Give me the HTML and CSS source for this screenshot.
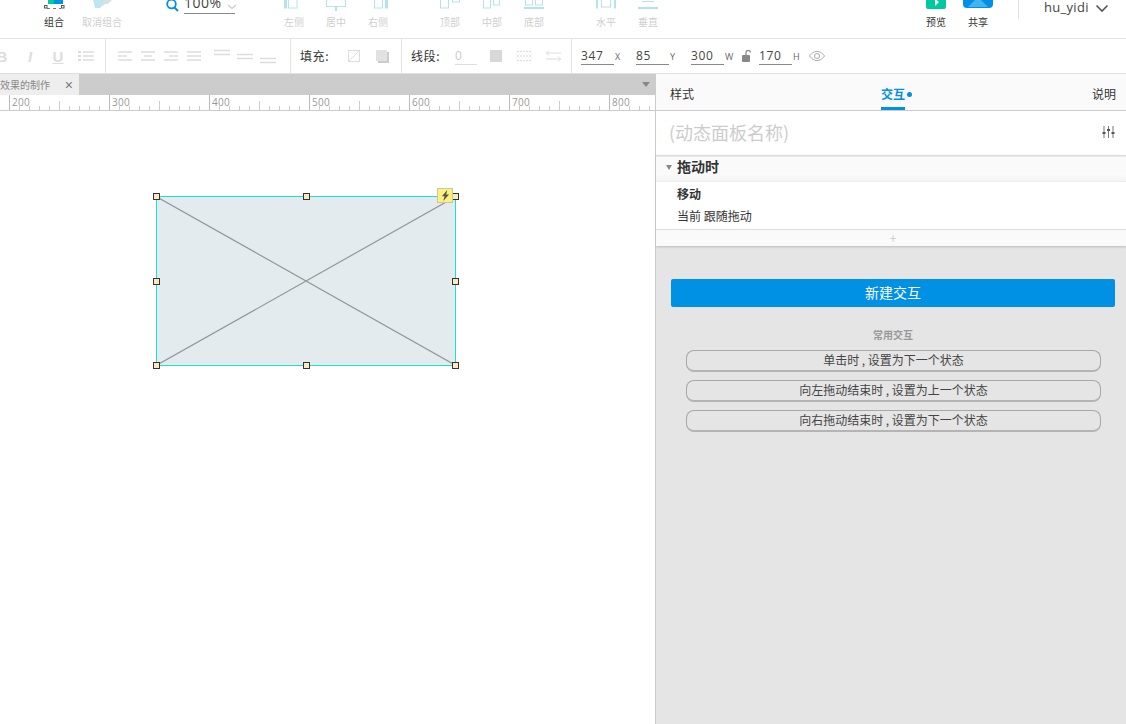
FILE: index.html
```html
<!DOCTYPE html>
<html lang="zh">
<head>
<meta charset="utf-8">
<title>交互</title>
<link rel="stylesheet" href="styles.css">
</head>
<body>
<div class="app">
  <header class="topbar">
    <div class="tool tool-first"><svg class="ticon" viewBox="0 0 30 14"><rect x="9" y="0" width="15" height="4" fill="#0090e4"/><rect x="9" y="0" width="6" height="4" fill="#00c9a0"/><path d="M8 8.500h14" stroke="#777" stroke-dasharray="3 3"/><rect x="5.500" y="5.500" width="2.500" height="2.500" fill="#fff" stroke="#555"/><rect x="22.500" y="5.500" width="2.500" height="2.500" fill="#fff" stroke="#555"/></svg><span class="tlabel on">组合</span></div>
    <div class="tool tool-wide"><svg class="ticon" viewBox="0 0 30 14"><path d="M6 0h10v5l-3 3H8z" fill="#bfe6ee"/><path d="M16 0h9l-4 4h-3l-2 2z" fill="#dcdfe0"/></svg><span class="tlabel">取消组合</span></div>
    <div class="zoom">
      <svg class="zoom-glass" viewBox="0 0 14 14"><circle cx="5.500" cy="4" r="4.300" fill="none" stroke="#0090e4" stroke-width="1.800"/><path d="M8.500 7.500l3.500 3.500" stroke="#0090e4" stroke-width="2"/></svg>
      <div class="zoom-val">100%</div>
      <svg class="zoom-chev" viewBox="0 0 10 6"><path d="M1 1l4 3.500L9 1" fill="none" stroke="#ccc" stroke-width="1.200"/></svg>
    </div>
    <div class="tool"><svg class="ticon" viewBox="0 0 30 14"><rect x="5" y="0" width="3" height="8.500" fill="#b5e3ec"/><rect x="9.500" y="-1" width="8.500" height="9" fill="none" stroke="#b5e3ec"/></svg><span class="tlabel">左侧</span></div>
    <div class="tool"><svg class="ticon" viewBox="0 0 30 14"><rect x="5.500" y="-2" width="19" height="8.500" fill="none" stroke="#b5e3ec"/><path d="M15 7v4" stroke="#b5e3ec" stroke-width="2"/></svg><span class="tlabel">居中</span></div>
    <div class="tool"><svg class="ticon" viewBox="0 0 30 14"><rect x="11.500" y="-1" width="8" height="9" fill="none" stroke="#b5e3ec"/><rect x="22" y="0" width="3" height="8.500" fill="#b5e3ec"/></svg><span class="tlabel">右侧</span></div>
    <div class="tool tool-gap"><svg class="ticon" viewBox="0 0 30 14"><rect x="5.500" y="-3" width="8" height="11" fill="none" stroke="#b5e3ec"/><rect x="17.500" y="-3" width="7" height="5" fill="none" stroke="#b5e3ec"/></svg><span class="tlabel">顶部</span></div>
    <div class="tool"><svg class="ticon" viewBox="0 0 30 14"><rect x="6.500" y="-3" width="7" height="11" fill="none" stroke="#b5e3ec"/><rect x="16.500" y="-3" width="6" height="8" fill="none" stroke="#b5e3ec"/></svg><span class="tlabel">中部</span></div>
    <div class="tool"><svg class="ticon" viewBox="0 0 30 14"><rect x="5" y="7" width="20" height="2" fill="#b5e3ec"/><rect x="6.500" y="-3" width="7" height="8" fill="none" stroke="#b5e3ec"/><rect x="16.500" y="-3" width="7" height="8" fill="none" stroke="#b5e3ec"/></svg><span class="tlabel">底部</span></div>
    <div class="tool tool-gap2"><svg class="ticon" viewBox="0 0 30 14"><rect x="5" y="0" width="2" height="8.500" fill="#b5e3ec"/><rect x="23" y="0" width="2" height="8.500" fill="#b5e3ec"/><rect x="10.500" y="-2" width="9" height="9" fill="none" stroke="#b5e3ec"/></svg><span class="tlabel">水平</span></div>
    <div class="tool"><svg class="ticon" viewBox="0 0 30 14"><rect x="5" y="7" width="20" height="2" fill="#b5e3ec"/><path d="M9 1.500h12" stroke="#b5e3ec"/></svg><span class="tlabel">垂直</span></div>
    <div class="top-right">
      <div class="tool"><svg class="ticon" viewBox="0 0 30 14"><path d="M5 -2h20v9a2 2 0 0 1-2 2H7a2 2 0 0 1-2-2z" fill="#00c9a0"/><path d="M14 -1v7l4-4z" fill="#fff"/></svg><span class="tlabel dark">预览</span></div>
      <div class="tool"><svg class="ticon" viewBox="0 0 30 14"><path d="M0 -2h30v6a4 4 0 0 1-4 4H4a4 4 0 0 1-4-4z" fill="#0090e4"/><path d="M5 7l7-7h6l7 7z" fill="#42b4f2"/></svg><span class="tlabel dark">共享</span></div>
      <div class="user"><span class="user-name">hu_yidi</span><svg class="user-chev" viewBox="0 0 14 9"><path d="M1.500 1.500L7 7l5.500-5.500" fill="none" stroke="#555" stroke-width="1.600"/></svg></div>
    </div>
  </header>

  <div class="formatbar">
    <div class="fgroup g-text">
      <span class="glyph bold">B</span><span class="glyph ital">I</span><span class="glyph under">U</span>
      <svg class="ficon" viewBox="0 0 16 12"><path d="M5 2h11M5 6h11M5 10h11" stroke="#ddd" stroke-width="1.500"/><path d="M0 2h3M0 6h3M0 10h3" stroke="#ddd" stroke-width="2"/></svg>
    </div>
    <div class="fgroup g-align">
      <svg class="aicon" viewBox="0 0 14 10"><path d="M0 1h14M0 5h9M0 9h14" stroke="#ddd" stroke-width="1.300"/></svg>
      <svg class="aicon" viewBox="0 0 14 10"><path d="M0 1h14M3 5h8M0 9h14" stroke="#ddd" stroke-width="1.300"/></svg>
      <svg class="aicon" viewBox="0 0 14 10"><path d="M0 1h14M5 5h9M0 9h14" stroke="#ddd" stroke-width="1.300"/></svg>
      <svg class="aicon" viewBox="0 0 14 10"><path d="M0 1h14M0 5h14M0 9h14" stroke="#ddd" stroke-width="1.300"/></svg>
      <svg class="vicon vfirst" viewBox="0 0 16 20"><path d="M0 5.500h16M0 9.500h16" stroke="#ddd" stroke-width="1.300"/></svg>
      <svg class="vicon" viewBox="0 0 16 20"><path d="M0 9.500h16M0 13.500h16" stroke="#ddd" stroke-width="1.300"/></svg>
      <svg class="vicon" viewBox="0 0 16 20"><path d="M0 13.500h16M0 17.500h16" stroke="#ddd" stroke-width="1.300"/></svg>
    </div>
    <div class="fgroup g-fill">
      <span class="flabel">填充:</span>
      <svg class="sq12 fill-none" viewBox="0 0 12 12"><rect x=".5" y=".5" width="11" height="11" fill="#fff" stroke="#ddd"/><path d="M1 11L11 1" stroke="#ddd"/></svg>
      <svg class="sq13 fill-shadow" viewBox="0 0 13 13"><rect x="2" y="2" width="11" height="11" fill="#ccc"/><rect x="0" y="0" width="11" height="11" fill="#e2e2e2"/></svg>
    </div>
    <div class="fgroup g-line">
      <span class="flabel">线段:</span>
      <span class="field-zero">0</span>
      <span class="line-sq"></span>
      <svg class="ficon line-dash" viewBox="0 0 15 12"><path d="M0 1.500h15M0 6h15M0 10.500h15" stroke="#ddd" stroke-dasharray="2 1"/></svg>
      <svg class="ficon line-arrows" viewBox="0 0 15 12"><path d="M0 3h15M3 .5L.5 3 3 5.500M0 9h15M12 6.500L14.500 9 12 11.500" fill="none" stroke="#ddd"/></svg>
    </div>
    <div class="fgroup g-geo">
      <span class="field">347</span><span class="unit">X</span>
      <span class="field">85</span><span class="unit">Y</span>
      <span class="field">300</span><span class="unit">W</span>
      <svg class="lock" viewBox="0 0 10 12"><rect x="0" y="5" width="8" height="7" rx="1" fill="#888"/><path d="M4 5V2.500a2.200 2.200 0 0 1 4.400 0" fill="none" stroke="#888" stroke-width="1.200"/></svg>
      <span class="field field-h">170</span><span class="unit">H</span>
      <svg class="eye" viewBox="0 0 16 10"><path d="M.5 5C3 1.500 5.500.5 8 .5S13 1.500 15.500 5C13 8.500 10.500 9.500 8 9.500S3 8.500.5 5z" fill="none" stroke="#aaa"/><circle cx="8" cy="5" r="2.500" fill="none" stroke="#aaa"/></svg>
    </div>
  </div>

  <div class="workspace">
    <main class="stage">
      <div class="tabstrip">
        <div class="tab"><span class="tab-name">效果的制作</span><span class="tab-x">×</span></div>
        <span class="tab-menu"></span>
      </div>
      <div class="ruler">
        <span>200</span><span>300</span><span>400</span><span>500</span><span>600</span><span>700</span><span>800</span>
      </div>
      <div class="canvas">
        <div class="widget">
          <svg class="cross" viewBox="0 0 298 168" preserveAspectRatio="none"><path d="M0 0L298 168M298 0L0 168" stroke="#969696" stroke-width="1.200" fill="none"/></svg>
          <span class="h h-tl"></span><span class="h h-tc"></span><span class="h h-tr"></span>
          <span class="h h-ml"></span><span class="h h-mr"></span>
          <span class="h h-bl"></span><span class="h h-bc"></span><span class="h h-br"></span>
          <span class="bolt"><svg viewBox="0 0 10 12"><path d="M7 0L1 6.800h3L2.500 12 9 4.800H5.800z" fill="#555"/></svg></span>
        </div>
      </div>
    </main>

    <aside class="panel">
      <nav class="ptabs">
        <span class="ptab ptab-style">样式</span>
        <span class="ptab ptab-active">交互<i class="dot"></i></span>
        <span class="ptab">说明</span>
      </nav>
      <div class="pname">
        <span class="pname-text">(动态面板名称)</span>
        <svg class="sliders" viewBox="0 0 13 12"><path d="M2 0v12M6.500 0v12M11 0v12" stroke="#777"/><path d="M.5 7h3M5 4h3M9.500 7h3" stroke="#555" stroke-width="2"/></svg>
      </div>
      <section class="case">
        <div class="case-head"><span class="caret"></span><span class="case-title">拖动时</span></div>
        <div class="case-body">
          <div class="action">移动</div>
          <div class="detail">当前 跟随拖动</div>
        </div>
        <div class="case-add">+</div>
      </section>
      <div class="pbody">
        <div class="newbtn">新建交互</div>
        <div class="common">常用交互</div>
        <div class="pill">单击时 , 设置为下一个状态</div>
        <div class="pill">向左拖动结束时 , 设置为上一个状态</div>
        <div class="pill">向右拖动结束时 , 设置为下一个状态</div>
      </div>
    </aside>
  </div>
</div>
</body>
</html>
```

FILE: styles.css
```css
* { box-sizing: border-box; }
html, body { margin: 0; height: 100%; overflow: hidden; }
body {
  background: #fff;
  color: #333;
  font-family: "Noto Sans CJK SC", "Open Sans", sans-serif;
  font-size: 12px;
}
.app { display: flex; flex-direction: column; height: 724px; width: 1126px; }

/* top toolbar */
.topbar {
  display: flex;
  height: 39px;
  flex: none;
  border-bottom: 1px solid #e4e4e4;
  padding-left: 33px;
  overflow: hidden;
}
.tool { width: 42px; display: flex; flex-direction: column; align-items: center; flex: none; }
.tool-wide { width: 54px; }
.ticon { width: 30px; height: 14px; flex: none; overflow: hidden; }
.tlabel { font-size: 10px; line-height: 16px; color: #cfcfcf; white-space: nowrap; }
.tlabel.on, .tlabel.dark { color: #333; }
.zoom { display: flex; width: 144px; flex: none; position: relative; padding-left: 37px; }
.zoom-glass { width: 14px; height: 14px; flex: none; }
.zoom-val {
  font-family: "Open Sans", sans-serif;
  font-size: 14px;
  line-height: 14px;
  width: 51px;
  margin-left: 4px;
  margin-top: -4px;
  height: 18px;
  border-bottom: 1px solid #888;
  color: #444;
  letter-spacing: .5px;
}
.zoom-chev { position: absolute; left: 98px; top: 4px; width: 10px; height: 6px; }
.tool-gap { margin-left: 30px; }
.tool-gap2 { margin-left: 30px; }
.top-right { display: flex; margin-left: auto; }
.user { display: flex; width: 127px; align-items: flex-start; position: relative; padding-left: 45px; flex: none; }
.user::before { content: ""; position: absolute; left: 19px; top: 0; height: 19px; width: 1px; background: #e2e2e2; }
.user-name { font-family: "Open Sans", sans-serif; font-size: 13px; line-height: 14px; color: #444; letter-spacing: .3px; }
.user-chev { width: 14px; height: 9px; margin-left: 6px; margin-top: 4px; flex: none; }

/* format bar */
.formatbar { display: flex; height: 35px; flex: none; border-bottom: 1px solid #e0e0e0; overflow: hidden; }
.fgroup { display: flex; align-items: center; border-right: 1px solid #e4e4e4; flex: none; }
.g-text { width: 106px; }
.glyph { width: 28px; flex: none; text-align: center; color: #ddd; font-family: "Liberation Sans", sans-serif; font-size: 15px; }
.bold { font-weight: 700; margin-left: -12px; }
.ital { font-style: italic; font-weight: 700; }
.under { text-decoration: underline; font-weight: 700; }
.ficon { width: 16px; height: 12px; margin-left: 6px; flex: none; }
.g-align { width: 185px; padding-left: 12px; gap: 9px; }
.aicon { width: 14px; height: 10px; flex: none; }
.vicon { width: 16px; height: 20px; flex: none; margin-left: -2px; margin-top: -3px; }
.vfirst { margin-left: 4px; }
.g-fill { width: 111px; padding-left: 9px; }
.flabel { color: #333; font-size: 12px; width: 29px; white-space: nowrap; letter-spacing: .6px; padding-bottom: 2px; }
.sq12 { width: 12px; height: 12px; flex: none; }
.sq13 { width: 13px; height: 13px; flex: none; }
.fill-none { margin-left: 19px; }
.fill-shadow { margin-left: 16px; }
.g-line { width: 170px; padding-left: 9px; }
.field-zero {
  margin-left: 15px; width: 22px; height: 18px;
  border-bottom: 1px solid #ddd; color: #ccc; line-height: 17px;
  font-family: "Open Sans", sans-serif; font-size: 12px;
}
.line-sq { width: 12px; height: 12px; background: #d8d8d8; margin-left: 13px; flex: none; }
.line-dash { width: 15px; margin-left: 15px; }
.line-arrows { width: 15px; margin-left: 14px; }
.g-geo { border-right: 0; padding-left: 9px; }
.field {
  width: 33px; height: 18px; flex: none; border-bottom: 1px solid #888;
  font-family: "Open Sans", sans-serif; font-size: 12px; line-height: 17px;
  letter-spacing: .7px; color: #444;
}
.unit { width: 22px; padding-left: 1px; flex: none; font-family: "Open Sans", sans-serif; font-size: 9px; color: #666; }
.unit + .lock { margin-left: -4px; }
.lock { width: 10px; height: 12px; flex: none; }
.field-h { margin-left: 7px; }
.eye { width: 16px; height: 10px; margin-left: -5px; flex: none; }

/* stage */
.workspace { display: flex; flex: 1; min-height: 0; }
.stage { width: 655px; flex: none; display: flex; flex-direction: column; }
.tabstrip { height: 21px; flex: none; background: #ccc; display: flex; justify-content: space-between; align-items: center; }
.tab { width: 79px; height: 21px; background: #eee; display: flex; justify-content: space-between; align-items: center; padding-right: 6px; }
.tab-name { font-size: 10px; color: #888; white-space: nowrap; }
.tab-x { font-family: "Liberation Sans", sans-serif; font-size: 14px; color: #777; line-height: 1; }
.tab-menu { width: 0; height: 0; border-style: solid; border-width: 5px 4.500px 0; border-color: #888 transparent transparent; margin-right: 5px; }
.ruler {
  height: 16px;
  flex: none;
  display: flex;
  padding-left: 9px;
  border-bottom: 1px solid #ccc;
  overflow: hidden;
  background-image:
    repeating-linear-gradient(90deg, #bbb 0 1px, transparent 1px 100px),
    repeating-linear-gradient(90deg, #ccc 0 1px, transparent 1px 50px),
    repeating-linear-gradient(90deg, #ccc 0 1px, transparent 1px 10px);
  background-position: 9px 0, 9px 6px, 9px 11px;
  background-repeat: no-repeat;
}
.ruler span {
  width: 100px; flex: none; padding-left: 3px;
  font-family: "Open Sans", sans-serif; font-size: 10px; line-height: 14px; color: #999;
  letter-spacing: .3px;
}
.canvas { flex: 1; position: relative; background: #fff; }
.widget {
  position: absolute; left: 156px; top: 85px; width: 300px; height: 170px;
  background: #e4ebee; border: 1px solid #17dfe0;
}
.cross { position: absolute; left: 0; top: 0; width: 100%; height: 100%; display: block; }
.h { position: absolute; width: 7px; height: 7px; background: #fde9bb; border: 1px solid #333; }
.h-tl { left: -4px; top: -4px; }
.h-tc { left: 50%; margin-left: -3px; top: -4px; }
.h-tr { right: -4px; top: -4px; }
.h-ml { left: -4px; top: 50%; margin-top: -3px; }
.h-mr { right: -4px; top: 50%; margin-top: -3px; }
.h-bl { left: -4px; bottom: -4px; }
.h-bc { left: 50%; margin-left: -3px; bottom: -4px; }
.h-br { right: -4px; bottom: -4px; }
.bolt {
  position: absolute; left: 280px; top: -9px; width: 16px; height: 15px;
  background: #fdf07e; border: 1px solid #c9c9a0;
  display: flex; align-items: center; justify-content: center;
}
.bolt svg { width: 9px; height: 11px; }

/* right panel */
.panel { flex: 1; min-width: 0; border-left: 1px solid #ccc; background: #e5e5e5; display: flex; flex-direction: column; }
.ptabs {
  height: 37px; flex: none; background: #fafafa; border-bottom: 1px solid #ccc;
  display: flex; justify-content: space-between; padding: 0 10px 0 14px; font-size: 12px; color: #333;
}
.ptab { line-height: 40px; height: 36px; white-space: nowrap; }
.ptab-style { width: 0; }
.ptab-active { color: #0090e4; position: relative; margin-left: 24px; font-weight: 700; width: 24px; box-shadow: inset 0 -3px #0090e4; }
.dot { position: absolute; left: 26px; top: 18px; width: 5px; height: 5px; border-radius: 50%; background: #0090e4; }
.pname { height: 44px; flex: none; background: #fff; display: flex; justify-content: space-between; align-items: center; padding: 0 11px 2px 13px; }
.pname-text { font-size: 18px; color: #ccc; }
.sliders { width: 13px; height: 12px; flex: none; }
.case { flex: none; background: #fff; box-shadow: 0 1px 2px #bbb; }
.case-head {
  height: 27px; background: linear-gradient(#fafafa 75%, #f4f4f4); border-top: 1px solid #ddd; border-bottom: 1px solid #eee;
  box-shadow: inset 0 1px #e8e8e8;
  display: flex; align-items: center; padding: 0 0 5px 10px;
}
.caret { width: 0; height: 0; border-style: solid; border-width: 5px 3px 0; border-color: #888 transparent transparent; margin-right: 5px; margin-top: 2px; }
.case-title { font-size: 14px; font-weight: 700; color: #333; }
.case-body { height: 48px; padding: 1px 0 0 21px; border-bottom: 1px solid #ddd; }
.action { font-weight: 700; font-size: 12px; line-height: 22px; color: #333; }
.detail { font-size: 12px; line-height: 22px; color: #333; }
.case-add { height: 16px; background: #fafafa; text-align: center; color: #ccc; line-height: 16px; font-size: 12px; padding-left: 4px; }
.pbody { flex: 1; padding: 33px 11px 0 15px; }
.newbtn { height: 28px; background: #0090e4; border-radius: 2px; color: #fff; text-align: center; font-size: 14px; line-height: 26px; }
.common { margin-top: 21px; text-align: center; font-size: 10px; font-weight: 700; color: #999; line-height: 14px; margin-bottom: 8px; }
.pill {
  height: 22px; margin: 0 14px 8px 15px; border: 1px solid #a8a8a8; border-bottom: 2px solid #b4b4b4; border-radius: 8px;
  text-align: center; font-size: 12px; line-height: 17px; color: #444;
}
```
